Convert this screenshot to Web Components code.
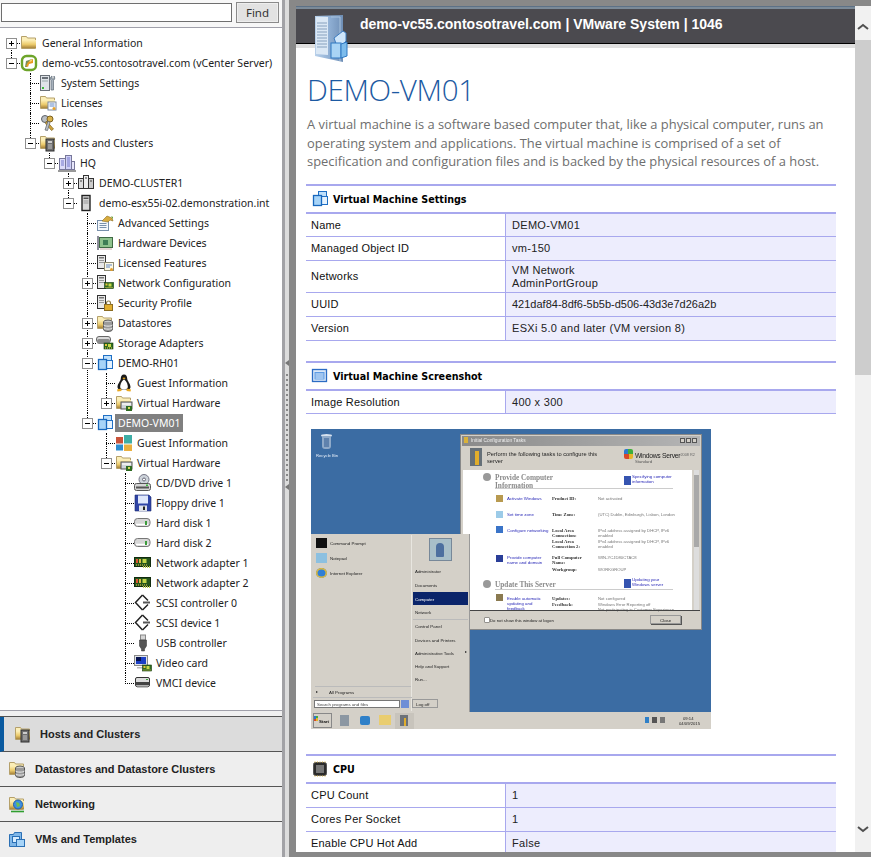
<!DOCTYPE html>
<html><head><meta charset="utf-8"><title>vSphere documentation</title>
<style>
html,body{margin:0;padding:0;height:100%;overflow:hidden;background:#fff}
</style></head><body>
<vm-app>
  <side-panel slot="side">
    <search-bar></search-bar>
    <tree-box>
      <tree-node top label="General Information" icon="folder" state="closed"></tree-node>
      <tree-node label="demo-vc55.contosotravel.com (vCenter Server)" icon="vcenter" state="open">
        <tree-node label="System Settings" icon="settings"></tree-node>
        <tree-node label="Licenses" icon="licenses"></tree-node>
        <tree-node label="Roles" icon="roles"></tree-node>
        <tree-node label="Hosts and Clusters" icon="hosts" state="open">
          <tree-node label="HQ" icon="datacenter" state="open">
            <tree-node label="DEMO-CLUSTER1" icon="cluster" state="closed"></tree-node>
            <tree-node label="demo-esx55i-02.demonstration.int" icon="host" state="open">
              <tree-node label="Advanced Settings" icon="advanced"></tree-node>
              <tree-node label="Hardware Devices" icon="hardware"></tree-node>
              <tree-node label="Licensed Features" icon="licfeat"></tree-node>
              <tree-node label="Network Configuration" icon="netcfg" state="closed"></tree-node>
              <tree-node label="Security Profile" icon="security"></tree-node>
              <tree-node label="Datastores" icon="datastores" state="closed"></tree-node>
              <tree-node label="Storage Adapters" icon="storage" state="closed"></tree-node>
              <tree-node label="DEMO-RH01" icon="vm" state="open">
                <tree-node label="Guest Information" icon="linux"></tree-node>
                <tree-node label="Virtual Hardware" icon="vhw" state="closed"></tree-node>
              </tree-node>
              <tree-node label="DEMO-VM01" icon="vm" state="open" selected>
                <tree-node label="Guest Information" icon="windows"></tree-node>
                <tree-node label="Virtual Hardware" icon="vhw" state="open">
                  <tree-node label="CD/DVD drive 1" icon="cd"></tree-node>
                  <tree-node label="Floppy drive 1" icon="floppy"></tree-node>
                  <tree-node label="Hard disk 1" icon="disk"></tree-node>
                  <tree-node label="Hard disk 2" icon="disk"></tree-node>
                  <tree-node label="Network adapter 1" icon="nic"></tree-node>
                  <tree-node label="Network adapter 2" icon="nic"></tree-node>
                  <tree-node label="SCSI controller 0" icon="scsi"></tree-node>
                  <tree-node label="SCSI device 1" icon="scsi"></tree-node>
                  <tree-node label="USB controller" icon="usb"></tree-node>
                  <tree-node label="Video card" icon="video"></tree-node>
                  <tree-node label="VMCI device" icon="vmci"></tree-node>
                </tree-node>
              </tree-node>
            </tree-node>
          </tree-node>
        </tree-node>
      </tree-node>
    </tree-box>
    <nav-list>
      <nav-item label="Hosts and Clusters" icon="hosts" active></nav-item>
      <nav-item label="Datastores and Datastore Clusters" icon="datastores"></nav-item>
      <nav-item label="Networking" icon="networking"></nav-item>
      <nav-item label="VMs and Templates" icon="vmfolder"></nav-item>
    </nav-list>
  </side-panel>
  <splitter-bar slot="split"></splitter-bar>
  <detail-pane slot="main">
    <page-header title="demo-vc55.contosotravel.com | VMware System | 1046"></page-header>
    <page-intro heading="DEMO-VM01">A virtual machine is a software based computer that, like a physical computer, runs an operating system and applications. The virtual machine is comprised of a set of specification and configuration files and is backed by the physical resources of a host.</page-intro>
    <prop-section heading="Virtual Machine Settings" icon="vm" gap="0">
      <prop-row h="23" name="Name">DEMO-VM01</prop-row>
      <prop-row h="24" name="Managed Object ID">vm-150</prop-row>
      <prop-row h="32" name="Networks">VM Network<br>AdminPortGroup</prop-row>
      <prop-row h="24" name="UUID"><span style="letter-spacing:0">421daf84-8df6-5b5b-d506-43d3e7d26a2b</span></prop-row>
      <prop-row h="24" name="Version">ESXi 5.0 and later (VM version 8)</prop-row>
    </prop-section>
    <prop-section heading="Virtual Machine Screenshot" icon="screen" gap="20">
      <prop-row h="23" name="Image Resolution">400 x 300</prop-row>
    </prop-section>
    <vm-screenshot></vm-screenshot>
    <prop-section heading="CPU" icon="cpu" gap="25">
      <prop-row h="24" name="CPU Count">1</prop-row>
      <prop-row h="24" name="Cores Per Socket">1</prop-row>
      <prop-row h="24" name="Enable CPU Hot Add">False</prop-row>
    </prop-section>
  </detail-pane>
  <scroll-rail slot="rail"></scroll-rail>
</vm-app>
<script>
const grad=`<defs><linearGradient id="fg" x1="0" y1="0" x2="0" y2="1"><stop offset="0" stop-color="#fdf0b8"/><stop offset=".55" stop-color="#eccb6c"/><stop offset="1" stop-color="#a8843c"/></linearGradient></defs>`;
const folder=`${grad}<path d="M1.500 2.500h5l1 1.500h8v10.500h-14z" fill="#fbeeb8" stroke="#b5a06a"/><path d="M2 6h14v8H2z" fill="url(#fg)"/>`;
const srv=`<rect x="1.500" y="1.500" width="8" height="13" fill="#e8e8e8" stroke="#333"/><rect x="3" y="3" width="5" height="1.500" fill="#777"/><rect x="3" y="6" width="5" height="1" fill="#999"/><rect x="3" y="8" width="5" height="1" fill="#999"/>`;
const card=(x,y)=>`<rect x="${x}" y="${y}" width="9" height="6" fill="#2f6b22" stroke="#173d10" stroke-width=".6"/><rect x="${x+1}" y="${y+1}" width="2" height="2" fill="#e9c23a"/><rect x="${x+4}" y="${y+1}" width="3" height="3" fill="#c7d94a"/><path d="M${x+1} ${y+5}h7" stroke="#f0d050" stroke-dasharray="1 1"/>`;
const I={
folder:folder,
vcenter:`<rect x="2" y="2" width="14" height="14" rx="4.500" fill="#fff" stroke="#6da42a" stroke-width="2.400"/><path d="M5 13l1-6 6-2 1 2-5 2-1 4z" fill="#7a8f5a"/><path d="M6 12l2-4 5-3 0 4-4 1-1 3z" fill="#e89a1e"/><path d="M9 7l3-2 0 2-2 1z" fill="#f9d27a"/>`,
settings:`<rect x="1.500" y="1.500" width="9" height="15" fill="#dfe3e8" stroke="#6a7078"/><rect x="3" y="3" width="6" height="2" fill="#6a7078"/><rect x="3" y="6.500" width="6" height="1" fill="#9aa"/><rect x="3" y="13" width="2" height="2" fill="#3cbb3c"/><path d="M13 2c-2 1-2 3-1 4.500L12 16h2.500V6.500c1.500-1 1.500-3 .5-4.500v3h-2z" fill="#a8b2bd" stroke="#5f6b77" stroke-width=".7"/>`,
licenses:`${folder}<rect x="9" y="8" width="8" height="8" fill="#fff" stroke="#7b8aa0"/><path d="M10.500 10h5M10.500 12h5" stroke="#5f86c7"/><circle cx="15" cy="14.500" r="1.500" fill="#e7a22b"/>`,
roles:`<circle cx="6" cy="5" r="3.500" fill="#b9bec4" stroke="#5c6066"/><path d="M7.500 7l7 8-2 1.500-6-7z" fill="#d2a53a" stroke="#7c6120" stroke-width=".7"/><circle cx="11" cy="5" r="3" fill="#d9b24c" stroke="#7c6120"/><path d="M9 7l-3 9 2.500.5 2.500-8z" fill="#b9bec4" stroke="#5c6066" stroke-width=".7"/>`,
hosts:`${folder}<rect x="7" y="5" width="8" height="12" fill="#6e6e6e" stroke="#2e2e2e"/><rect x="9" y="7" width="4" height="2" fill="#ccc"/><rect x="9" y="10" width="4" height="5" fill="#999"/>`,
datacenter:`<rect x="1.500" y="4.500" width="6" height="11" fill="#dcdcf8" stroke="#77779a"/><rect x="7.500" y="1.500" width="6" height="14" fill="#cfd0f5" stroke="#77779a"/><rect x="13.500" y="7.500" width="3" height="8" fill="#e6e6fa" stroke="#77779a"/><path d="M3 7h3M3 9h3M3 11h3M9 4h3M9 6h3M9 8h3M9 10h3M9 12h3" stroke="#7478cc"/><path d="M0 17h18" stroke="#333"/>`,
cluster:`<rect x="1.500" y="4.500" width="5" height="10" fill="#ddd" stroke="#333"/><rect x="6.500" y="1.500" width="5" height="13" fill="#eee" stroke="#333"/><rect x="11.500" y="4.500" width="5" height="10" fill="#ccc" stroke="#333"/><path d="M3 7h2M8 4h2M13 7h2" stroke="#444"/>`,
host:`<rect x="5" y="1.500" width="8" height="15" fill="#d8d8d8" stroke="#222" stroke-width="1.400"/><rect x="6.500" y="3.500" width="5" height="1.500" fill="#555"/><path d="M6.500 7h5M6.500 9h5" stroke="#999"/>`,
advanced:`<rect x="1.500" y="6.500" width="11" height="10" fill="#f4f7fb" stroke="#7890ab"/><path d="M3.500 9.500h7M3.500 11.500h7M3.500 13.500h7" stroke="#7890ab"/><path d="M6 7l5-5 5 2 1 3-3-1-2 2z" fill="#d8ac3f" stroke="#8c6d22" stroke-width=".6"/><path d="M15 2l2 1v2z" fill="#57a12f"/>`,
hardware:`<path d="M2 2v14" stroke="#667" stroke-width="1.500"/><rect x="3.500" y="3.500" width="13" height="10" fill="#8fc28d" stroke="#3f6a44"/><rect x="7" y="6" width="5" height="5" fill="#3e7d55"/><path d="M4 15h12" stroke="#caa" />`,
licfeat:`${srv}<rect x="8.500" y="8.500" width="9" height="8" fill="#fdf8e4" stroke="#8d8a72"/><path d="M10 11h6M10 13h4" stroke="#5f86c7"/><circle cx="15.500" cy="15.500" r="1.500" fill="#e79e2a"/>`,
netcfg:`${srv}${card(8.500,8.500)}`,
security:`${srv}<rect x="8.500" y="10.500" width="8" height="6" fill="#e1ae2f" stroke="#8c6d22"/><path d="M10.500 10.500V9a2 2 0 0 1 4 0v1.500" fill="none" stroke="#8c7a45" stroke-width="1.200"/>`,
datastores:`${folder}<ellipse cx="12" cy="8" rx="4.500" ry="2" fill="#c9c9c9" stroke="#555"/><path d="M7.500 8v7.500c0 1 2 2 4.500 2s4.500-1 4.500-2V8" fill="#9a9a9a" stroke="#555"/><path d="M7.500 11c1 1.500 8 1.500 9 0M7.500 14c1 1.500 8 1.500 9 0" stroke="#eee" fill="none"/>`,
storage:`<rect x=".5" y="2.500" width="14" height="6" rx="2.500" fill="#d9d9d9" stroke="#666"/><rect x="1" y="5" width="13" height="5" rx="2" fill="#8a8a8a"/>${card(8,9)}`,
vm:`<rect x="7.500" y="1.500" width="8" height="8" fill="#bfe0fb" stroke="#1f6fc4"/><rect x="9.500" y="6.500" width="7" height="8" fill="#e4f2fe" stroke="#1f6fc4"/><rect x="2.500" y="5.500" width="8" height="10" fill="#a7d4f8" stroke="#1767bd" stroke-width="1.300"/>`,
linux:`<path d="M9 .5c-2.200 0-3.200 1.800-3.200 4 0 2.500-3.300 5-3.300 8.500 0 1.500 1 2.500 2.500 2.500h8c1.500 0 2.500-1 2.500-2.500 0-3.500-3.300-6-3.300-8.500 0-2.200-1-4-3.200-4z" fill="#1a1a1a"/><path d="M9 5.500c-2 1-3.800 4.500-3.800 7.500 0 1.500 1.500 2.500 3.800 2.500s3.800-1 3.800-2.500c0-3-1.800-6.500-3.800-7.500z" fill="#fff"/><path d="M7.300 4l1.700 1.500L10.700 4 9 3.500z" fill="#e9a820"/><path d="M2 15.500l4-1 .5 2.500-4 .5zM16 15.500l-4-1-.5 2.500 4 .5z" fill="#e9a820"/>`,
vhw:`${folder}<rect x="6" y="8" width="11" height="7" fill="#cfd4da" stroke="#555"/><rect x="7" y="9" width="9" height="2" fill="#eee"/><rect x="11" y="12" width="6" height="5" fill="#2f6b22"/><rect x="13" y="13" width="2" height="2" fill="#d4d85a"/>`,
windows:`<rect x="1" y="3" width="7" height="6.500" fill="#c9533a"/><rect x="9" y="1" width="8" height="8.500" fill="#3eaea6"/><rect x="1" y="10.500" width="7" height="6" fill="#2d8dd0"/><rect x="9" y="10.500" width="8" height="6.500" fill="#e9b040"/>`,
cd:`<circle cx="10" cy="5.500" r="5" fill="#cdd3da" stroke="#778"/><circle cx="10" cy="5.500" r="1.500" fill="#fff" stroke="#667"/><rect x=".5" y="9.500" width="16" height="7" rx="2" fill="#d5d5d5" stroke="#555"/><path d="M2 13.500h13" stroke="#555" stroke-width="2"/><rect x="12" y="10.500" width="2" height="1.500" fill="#3cbb3c"/>`,
floppy:`<path d="M1 1h14l2 2v14H1z" fill="#2f44a6" stroke="#1d2c72" stroke-width=".6"/><rect x="4" y="1.500" width="10" height="8" fill="#dfe7fb"/><rect x="5" y="11.500" width="8" height="5.500" fill="#dfe2ea"/><rect x="9" y="12.500" width="2" height="3.500" fill="#222"/>`,
disk:`<rect x=".5" y="4.500" width="15.500" height="8" rx="3" fill="#d6d6d6" stroke="#777"/><path d="M2 10.500h12" stroke="#fff" stroke-width="1.500"/><rect x="11" y="7" width="2" height="4" fill="#3c9c3c"/>`,
nic:`<rect x=".5" y="3.500" width="16" height="9" fill="#25541c" stroke="#122c0e"/><rect x="2" y="5" width="2" height="4" fill="#d53"/><rect x="5" y="5" width="2" height="4" fill="#db4"/><rect x="8.500" y="5" width="4" height="4" fill="#c3d64a"/><path d="M2 11h12" stroke="#f0d050" stroke-dasharray="1 1"/><path d="M9 13h7" stroke="#b7c650" stroke-width="2" stroke-dasharray="1 1"/>`,
scsi:`<path d="M8.500 1L1.500 8.500l7 7.500" fill="none" stroke="#222" stroke-width="1.500"/><path d="M8.500 1l5.500 5.500M8.500 16l5.500-5.500" stroke="#222" stroke-width="1.500"/><path d="M9 8.500h7" stroke="#555" stroke-width="2"/>`,
usb:`<rect x="6.500" y="1" width="5" height="5" fill="#d5d5d5" stroke="#888"/><path d="M5.500 6h7v6l-2 3v2h-3v-2l-2-3z" fill="#555" stroke="#333" stroke-width=".5"/>`,
video:`<rect x=".5" y="1.500" width="13" height="10" fill="#dfe3e8" stroke="#888"/><rect x="2" y="3" width="10" height="7" fill="#1c3fc5"/><path d="M2 3h5v4H2z" fill="#06124e"/><path d="M3 13h8v1.500H3z" fill="#bbb"/>${card(8.500,11)}`,
vmci:`<rect x="1.500" y="3.500" width="14" height="9" rx="1.500" fill="#ddd" stroke="#333"/><rect x="1.500" y="8" width="14" height="3" fill="#444"/><path d="M3 12.500h11" stroke="#888" stroke-width="2"/><rect x="12" y="5" width="2" height="1" fill="#39a039"/>`,
networking:`${folder}<circle cx="10" cy="9.500" r="4.500" fill="#3e8fe0" stroke="#1f5ea8"/><path d="M8 7l3 1 1 3-3 1z" fill="#6cc050"/><path d="M3 16.500h13" stroke="#2f9e2f" stroke-width="1.600"/>`,
vmfolder:`<path d="M1.500 4.500h4l1-2h7v14h-12z" fill="#7fb7e8" stroke="#2a6fb4"/><rect x="4.500" y="6.500" width="7" height="6" fill="#d7ecfd" stroke="#2a6fb4"/><rect x="8.500" y="9.500" width="8" height="7" fill="#a7d4f8" stroke="#2a6fb4"/>`,
screen:`<rect x="1.500" y="2.500" width="14" height="12" fill="#dbe8f8" stroke="#2b6cc4" stroke-width="1.300"/><rect x="3.500" y="5" width="10" height="7.500" fill="#5d9be4"/><path d="M4.500 7h8M4.500 9h8M4.500 11h8" stroke="#e3effc"/>`,
cpu:`<rect x="2.500" y="2.500" width="13" height="13" rx="2" fill="#2b2b2b" stroke="#555"/><rect x="5" y="5" width="8" height="8" fill="#777"/><path d="M4 1.500v1M6.500 1.500v1M9 1.500v1M11.500 1.500v1M14 1.500v1M4 15.500v1M6.500 15.500v1M9 15.500v1M11.500 15.500v1M14 15.500v1" stroke="#d9ae37"/>`
};
const def=(name,cls)=>customElements.define(name,cls);
class Base extends HTMLElement{
  render(html){ (this.shadowRoot||this.attachShadow({mode:'open'})).innerHTML=html; }
}
def('app-icon',class extends Base{connectedCallback(){const s=this.getAttribute('size')||18;
  this.render(`<style>:host{display:inline-block;width:${s}px;height:${s}px;flex:none}svg{display:block}</style><svg width="${s}" height="${s}" viewBox="0 0 18 18">${I[this.getAttribute('name')]||''}</svg>`)}});
def('vm-app',class extends Base{connectedCallback(){this.render(`<style>:host{display:grid;grid-template-columns:285px 4px 566px 16px;width:871px;height:857px;overflow:hidden;background:#888;font-family:"Liberation Sans",Arial,sans-serif}</style><slot name="side"></slot><slot name="split"></slot><slot name="main"></slot><slot name="rail"></slot>`)}});
def('side-panel',class extends Base{connectedCallback(){this.render(`<style>:host{display:flex;flex-direction:column;height:857px;background:#f0f0f0;border-right:3px solid #a2a2a6;box-sizing:border-box}</style><slot></slot>`)}});
def('search-bar',class extends Base{connectedCallback(){this.render(`<style>:host{display:flex;align-items:center;gap:4px;height:27px;padding:0 3px 1px 1px;box-sizing:border-box;background:#f7f7f7}
.i{width:231px;height:19px;box-sizing:border-box;border:1px solid #6f6f6f;background:#fff;padding:0;margin:0}
.b{width:43px;height:21px;box-sizing:border-box;border:1px solid #8a8a8a;outline:1px solid #eee;outline-offset:-2px;background:#e2e2e2;font:11.500px "Noto Sans",sans-serif;color:#333;padding:0;line-height:17px}</style><input class="i" aria-label="Search"><button class="b">Find</button>`)}});
def('tree-box',class extends Base{connectedCallback(){this.render(`<style>:host{display:block;height:685px;box-sizing:border-box;background:#fff;border-top:1px solid #a0a0aa;border-bottom:1px solid #a0a0aa;padding-top:5px;font:10.500px "Noto Sans",sans-serif;color:#222;overflow:hidden}</style><slot></slot>`)}});
def('tree-node',class extends Base{connectedCallback(){
  const st=this.getAttribute('state');
  const tog=st?`<svg class="t" width="11" height="11" viewBox="0 0 11 11"><rect x=".5" y=".5" width="10" height="10" fill="#fff" stroke="#909090"/><path d="M3 5.500h5${st==='closed'?'M5.500 3v5':''}" stroke="#000"/></svg>`:'';
  this.render(`<style>
  :host{display:block;position:relative}
  :host::before{content:"";position:absolute;left:11px;top:0;bottom:0;border-left:1px dotted #000}
  :host(:last-child)::before{bottom:auto;height:11px}
  :host([top])::before{top:10px}
  .r{display:flex;align-items:center;height:20px;position:relative}
  .c{width:20px;height:20px;flex:none;position:relative}
  .c i{position:absolute;left:11px;top:10px;width:9px;border-top:1px dotted #000}
  .t{position:absolute;left:6px;top:5px;display:block}
  .l{margin-left:1px;padding:0 3px;line-height:18px;height:18px;white-space:nowrap}
  :host([selected]) .r>.l{background:#808080;color:#fff}
  .k{margin-left:19px}
  </style><div class="r"><div class="c"><i></i>${tog}</div><app-icon name="${this.getAttribute('icon')}"></app-icon><span class="l">${this.getAttribute('label')}</span></div><div class="k"><slot></slot></div>`)}});
def('nav-list',class extends Base{connectedCallback(){this.render(`<style>:host{display:block;margin-top:5px;border-top:1px solid #555;flex:1}</style><slot></slot>`)}});
def('nav-item',class extends Base{connectedCallback(){this.render(`<style>:host{display:flex;align-items:center;height:35px;box-sizing:border-box;border-bottom:1px solid #555;background:#eee;padding-left:8px;font:bold 11px "Liberation Sans",sans-serif;color:#222}
  :host(:last-child){border-bottom-color:#eee}
  :host([active]){background:#dcdcdc;border-left:4px solid #0a5aa0;padding-left:10px}
  app-icon{margin-right:9px}
  :host([active]) app-icon{margin-right:8px}</style><app-icon name="${this.getAttribute('icon')}"></app-icon><span>${this.getAttribute('label')}</span>`)}});
def('splitter-bar',class extends Base{connectedCallback(){this.render(`<style>:host{display:flex;flex-direction:column;align-items:center;background:#dcdcdc;box-sizing:border-box;height:857px;width:4px;padding-top:360px}
  .a{width:0;height:0;border:3.500px solid transparent;border-left:0;border-right:4px solid #777;flex:none}
  .d{width:2px;height:108px;flex:none;margin:8px 0 2px;background:repeating-linear-gradient(#888 0 2px,transparent 2px 5px)}</style><div class="a"></div><div class="d"></div><div class="a"></div>`)}});
def('detail-pane',class extends Base{connectedCallback(){this.render(`<style>:host{display:block;height:852px;overflow:hidden;background:#fff;border-left:7px solid #888;box-sizing:border-box;position:relative}
  .w{display:block}</style><div class="w"><slot></slot></div>`)}});
def('page-header',class extends Base{connectedCallback(){this.render(`<style>:host{display:block;background:#888;padding-top:6px;position:relative}
  .l{height:3px;background:linear-gradient(#5d7186 34%,#7b8a98 34%)}
  .h{height:35px;box-sizing:border-box;background:#4b4a4f;border-bottom:1px solid #000;color:#fff;font:bold 14px "Liberation Sans",sans-serif;line-height:31px;padding-left:64px}
  .g{height:4px;background:#dfdfdf}
  svg{position:absolute;left:18px;top:14px}</style>
  <div class="l"></div><div class="h">${this.getAttribute('title')}</div><div class="g"></div>
  <svg width="36" height="50" viewBox="0 0 36 50"><defs><linearGradient id="s" x1="0" x2="1"><stop offset="0" stop-color="#b8d0ea"/><stop offset=".55" stop-color="#8dadd2"/><stop offset="1" stop-color="#6f8fb6"/></linearGradient></defs>
  <path d="M1 2l28-1v47L1 42z" fill="url(#s)"/><path d="M2 3h12v38L2 40z" fill="#dbe8f5"/><path d="M3 9h10M3 12h10M3 15h10M3 18h10M3 21h10M3 24h10M3 27h10M3 30h10M3 33h10" stroke="#86a0bd"/><path d="M17 3l9 0v44" stroke="#a8c2dd" fill="none"/>
  <path d="M20 24l9-7 3 2v8l-8 8z" fill="#cfe6fa" stroke="#3d7cc0"/><rect x="17" y="29" width="10" height="15" fill="#a9d4f5" stroke="#2f78c2"/><path d="M27 30l6-2v14l-6 2z" fill="#7dbcec" stroke="#2f78c2"/></svg>`)}});
def('page-intro',class extends Base{connectedCallback(){this.render(`<style>:host{display:block;padding:20px 19px 13.500px 11px}
  h1{margin:0;font:300 29.500px/44px "Open Sans",sans-serif;color:#1c5aa2;letter-spacing:-.35px}
  p{margin:3px 0 0;font:12.900px/18.500px "Open Sans",sans-serif;color:#6e6e6e;width:530px}</style><h1>${this.getAttribute('heading')}</h1><p><slot></slot></p>`)}});
def('prop-section',class extends Base{connectedCallback(){this.render(`<style>:host{display:block;margin:${this.getAttribute('gap')||0}px 19px 0 10px;width:530px}
  .h{display:flex;align-items:center;height:26px;border-top:2px solid #a8a8ee;border-bottom:2px solid #a8a8ee;background:#fff;padding-left:5px;font:bold 9.600px "DejaVu Sans",sans-serif;color:#000}
  app-icon{margin-right:4px}</style><div class="h"><app-icon name="${this.getAttribute('icon')}"></app-icon><span>${this.getAttribute('heading')}</span></div><slot></slot>`)}});
def('prop-row',class extends Base{connectedCallback(){this.render(`<style>:host{display:grid;grid-template-columns:200px 330px;height:${this.getAttribute('h')}px;box-sizing:border-box;border-bottom:1px solid #a8a8ee;font:11px/13px "Liberation Sans",sans-serif}
  div{display:flex;align-items:center}
  .n{color:#111;border-right:1px solid #a8a8ee;padding-left:5px;letter-spacing:.2px}
  .v{background:#ededfd;color:#222;padding-left:6px;letter-spacing:.3px}</style><div class="n">${this.getAttribute('name')}</div><div class="v"><span><slot></slot></span></div>`)}});
def('scroll-rail',class extends Base{connectedCallback(){this.render(`<style>:host{display:flex;flex-direction:column;height:846px;margin-top:6px;background:#f1f1f1;width:16px}
  .b{flex:none;display:flex;align-items:center;justify-content:center;box-sizing:border-box}.th{height:335px;background:#cdcdcd;flex:none}.s{flex:1}
  svg{display:block}</style><div class="b" style="height:34px;padding-top:8px"><svg width="12" height="8" viewBox="0 0 12 8"><path d="M1 6l5-4 5 4" fill="none" stroke="#505050" stroke-width="2"/></svg></div><div class="th"></div><div class="s"></div><div class="b" style="height:46px"><svg width="12" height="8" viewBox="0 0 12 8"><path d="M1 2l5 4 5-4" fill="none" stroke="#505050" stroke-width="2"/></svg></div>`)}});
def('vm-screenshot',class extends Base{connectedCallback(){
  const T=(x,y,txt,o='')=>`<span class="t" style="left:${x}px;top:${y}px;${o}">${txt}</span>`;
  const B=(x,y,w,h,c,o='')=>`<b style="left:${x}px;top:${y}px;width:${w}px;height:${h}px;background:${c};${o}"></b>`;
  const blue='color:#2a2ab8;', ser='font-family:Liberation Serif;font-weight:bold;color:#333;font-size:4.700px;', gr='color:#777;font-size:4.200px;', head='font-family:Liberation Serif;font-weight:bold;color:#8a8a8a;font-size:7.300px;';
  const left=[[114,'Command Prompt','#111'],[129,'Notepad','#8cc0e0'],[144,'Internet Explorer','#2f7fd6']];
  const right=[[142,'Administrator'],[155.500,'Documents'],[169.500,'Computer','color:#fff;'],[182.500,'Network'],[197,'Control Panel'],[210.500,'Devices and Printers'],[223.500,'Administrative Tools'],[237,'Help and Support'],[250,'Run...']];
  const win=[
   [196,69,'Activate Windows',blue],[241,69,'Product ID:',ser],[287,69,'Not activated',gr],
   [196,85,'Set time zone',blue],[241,85,'Time Zone:',ser],[287,85,'(UTC) Dublin, Edinburgh, Lisbon, London',gr],
   [196,100.500,'Configure networking',blue],[241,100.500,'Local Area',ser],[241,105.500,'Connection:',ser],[287,100.500,'IPv4 address assigned by DHCP, IPv6',gr],[287,105.500,'enabled',gr],
   [241,111.500,'Local Area',ser],[241,117,'Connection 2:',ser],[287,111.500,'IPv4 address assigned by DHCP, IPv6',gr],[287,117,'enabled',gr],
   [196,128,'Provide computer',blue],[196,133,'name and domain',blue],[241,128,'Full Computer',ser],[241,133,'Name:',ser],[287,128,'WIN-YCJD80CTAC8',gr],
   [241,139.500,'Workgroup:',ser],[287,139.500,'WORKGROUP',gr],
   [196,168.500,'Enable automatic',blue],[196,173.500,'updating and',blue],[196,178.500,'feedback',blue],[241,168.500,'Updates:',ser],[287,168.500,'Not configured',gr],[241,175,'Feedback:',ser],[287,175,'Windows Error Reporting off',gr],[287,180,'Not participating in Customer Experience',gr],
   [321,47,'Specifying computer',blue],[321,52,'information',blue],[321,150,'Updating your',blue],[321,155,'Windows server',blue]];
  this.render(`<style>:host{display:block;margin:15px 0 0 15px;width:400px;height:300px;position:relative;overflow:hidden;background:#3b6ca3;filter:blur(.45px);font:4.400px/5px "Liberation Sans",sans-serif;color:#333}
  .t{position:absolute;white-space:nowrap;line-height:5px;transform:translateY(-2.500px)}
  b{position:absolute;display:block;font-weight:normal}</style>
  ${B(10,5,11,3,'#d7e2ef','border-radius:50%;')}${B(11,7,9,13,'#8faac9','border-radius:1px 1px 3px 3px;')}${B(13,9,5,9,'#5f82ad')}${T(5,26,'Recycle Bin','color:#e8f0fa;font-size:4.200px;')}
  <!-- config window -->
  ${B(150,6,240,194,'#d4d0c8','box-shadow:0 0 0 1px #888;')}
  ${B(151,7,238,10,'linear-gradient(90deg,#8a8a8a,#b5b5b5)')}${T(160,11,'Initial Configuration Tasks','color:#eee;font-size:4.800px;')}${B(153,8,4,6,'#d9b13a')}
  ${B(369,9,5,5,'#d4d0c8','border:.5px solid #555;box-sizing:border-box;')}${B(375,9,5,5,'#d4d0c8','border:.5px solid #555;box-sizing:border-box;')}${B(381,9,5,5,'#d4d0c8','border:.5px solid #555;box-sizing:border-box;')}
  ${B(159,19,12,18,'#667078')}${B(164,22,4,14,'#e1ad2b')}
  ${T(176,25,'Perform the following tasks to configure this','font-size:5.700px;color:#222;')}${T(176,32,'server','font-size:5.700px;color:#222;')}
  ${B(313,20,9,10,'conic-gradient(#3eae3a 25%,#e6b62a 25% 50%,#d8482a 50% 75%,#2d78d0 75%)','border-radius:2px;')}
  ${T(324,26,'Windows Server','font-size:6.800px;color:#222;letter-spacing:-.3px;')}${T(369.500,26,'2008 R2','font-size:3.800px;color:#666;')}${T(324,31.500,'Standard','font-size:4.200px;color:#555;')}
  ${B(152,41,229,140,'#fff')}
  ${B(383,41,5,140,'#ddd')}${B(383,46,5,72,'#a9a9a9')}
  ${B(172,44,8,8,'#999','border-radius:50%;')}${T(184,47.500,'Provide Computer',head)}${T(184,55.500,'Information',head)}
  ${B(184,59,178,1,'#ccc')}
  ${B(313,47,7,9,'#3554b0')}${B(313,150,7,9,'#3554b0')}
  ${B(185,66,7,7,'#b89a50')}${B(185,82,7,7,'#9ccbe8')}${B(185,97,7,7,'#3a74c8')}${B(185,126,7,7,'#2a3e98')}${B(185,165,7,7,'#8a7a50')}
  ${B(172,151,8,8,'#999','border-radius:50%;')}${T(184,155,'Update This Server',head)}${B(184,160,178,1,'#ccc')}
  ${win.map(w=>T(w[0],w[1],w[2],w[3])).join('')}
  ${B(151,181,238,1,'#444')}
  ${B(174,189,4,4,'#fff','box-shadow:0 0 0 .5px #555;')}${T(179,190.500,'Do not show this window at logon','color:#222;font-size:4.300px;')}
  ${B(339,186,31,9,'#d4d0c8','box-shadow:1px 1px 0 #555;border:.5px solid #999;box-sizing:border-box;')}${T(349,190.500,'Close','color:#222;')}
  <!-- start menu -->
  ${B(0,105,158,178,'#d4d0c8','box-shadow:1px 0 0 #999;')}${B(100,106,1,176,'#e8e6e0')}
  ${left.map(l=>B(5,l[0]-5,11,10,l[2],l[2]=='#2f7fd6'?'border-radius:50%;box-shadow:inset 0 0 0 1.500px #e0b93a;':'')+T(19,l[0],l[1],'color:#222;')).join('')}
  ${B(118,109,23,23,'#a8bfc9','border:1px solid #789;box-sizing:border-box;')}${B(125,114,8,14,'#4c6f9f','border-radius:4px 4px 1px 1px;')}
  ${B(102,163,55,13,'#0a246a')}
  ${B(102,190,55,1,'#bbb')}
  ${right.map(r=>T(104,r[0],r[1],r[2]||'color:#222;')).join('')}
  ${B(154,222,0,0,'transparent','border-left:2px solid #222;border-top:1.500px solid transparent;border-bottom:1.500px solid transparent;')}
  ${B(4,257,96,1,'#bbb')}${B(5,262,0,0,'transparent','border-left:2px solid #222;border-top:1.500px solid transparent;border-bottom:1.500px solid transparent;')}${T(18,263,'All Programs','color:#222;')}
  ${B(2,268,99,1,'#bbb')}
  ${B(3,271,86,8,'#fff','border:.5px solid #777;box-sizing:border-box;')}${T(6,275,'Search programs and files','color:#444;')}${B(90,271,8,8,'#6e8ed6')}
  ${B(101,270,26,9,'#d4d0c8','border:.5px solid #999;box-sizing:border-box;')}${T(105,275,'Log off','color:#222;')}
  <!-- taskbar -->
  ${B(0,283,400,17,'#d4d0c8')}
  ${B(2,284,19,15,'#d4d0c8','box-shadow:inset 0 0 0 1px #888;')}${B(3,287,4,5,'conic-gradient(#3eae3a 25%,#e6b62a 25% 50%,#d8482a 50% 75%,#2d78d0 75%)')}${T(8,291.500,'Start','color:#111;font-weight:bold;')}
  ${B(29,286,9,11,'#8c97a2')}${B(49,287,10,9,'#2f80c8','border-radius:2px;')}${B(68,286,12,10,'#e9cd70')}${B(84,284,19,16,'#c8c4bc')}${B(89,286,8,11,'#6d7278')}${B(93,289,2,8,'#e1ad2b')}
  ${B(334,288,4,6,'#2f80c8')}${B(341,288,5,6,'#555')}${B(349,288,5,6,'#777')}${T(372,289,'09:14','color:#222;font-size:4.200px;')}${T(368,294,'04/09/2015','color:#222;font-size:4.200px;')}
  `)}});
</script>
</body></html>
